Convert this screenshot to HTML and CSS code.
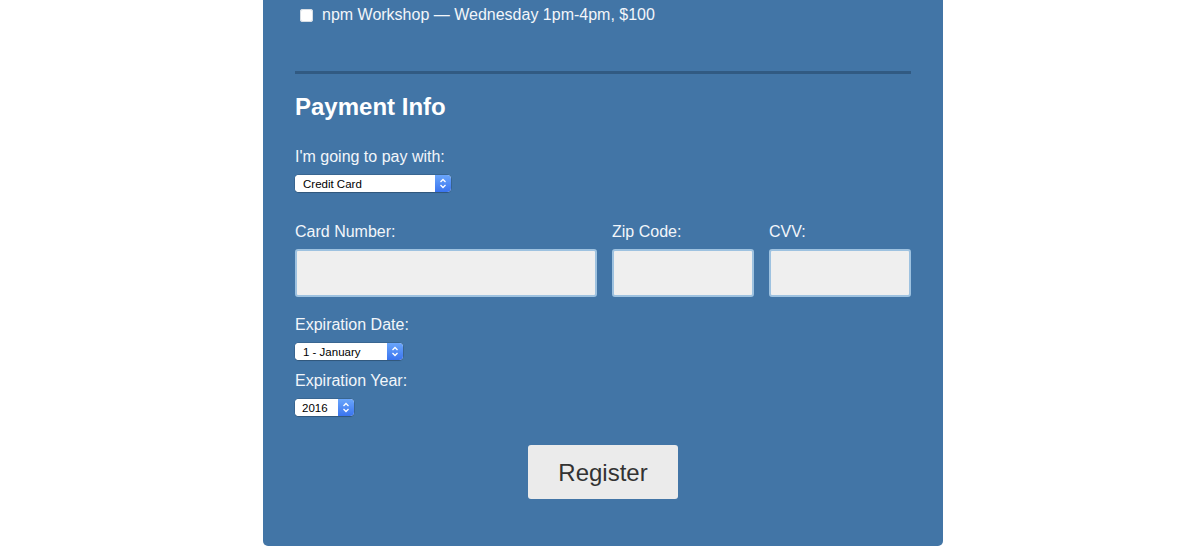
FILE: index.html
```html
<!DOCTYPE html>
<html lang="en">
<head>
<meta charset="utf-8">
<title>Registration</title>
<link rel="stylesheet" href="styles.css">
</head>
<body>
<form class="panel">
  <label class="workshop"><span class="check"></span>npm Workshop — Wednesday 1pm-4pm, $100</label>
  <hr class="divider">
  <h2 class="title">Payment Info</h2>
  <p class="label label-pay">I'm going to pay with:</p>
  <div class="select select-pay">
    <select><option>Credit Card</option></select>
    <span class="arrow"><svg width="8" height="11" viewBox="0 0 8 11"><path d="M1.5 4 L4 1.5 L6.5 4 M1.5 7 L4 9.5 L6.5 7" fill="none" stroke="#fff" stroke-width="1.3"/></svg></span>
  </div>
  <div class="card-grid">
    <div class="field"><p class="label">Card Number:</p><input class="text-input" type="text"></div>
    <div class="field"><p class="label">Zip Code:</p><input class="text-input" type="text"></div>
    <div class="field"><p class="label">CVV:</p><input class="text-input" type="text"></div>
  </div>
  <p class="label label-date">Expiration Date:</p>
  <div class="select select-month">
    <select><option>1 - January</option></select>
    <span class="arrow"><svg width="8" height="11" viewBox="0 0 8 11"><path d="M1.5 4 L4 1.5 L6.5 4 M1.5 7 L4 9.5 L6.5 7" fill="none" stroke="#fff" stroke-width="1.3"/></svg></span>
  </div>
  <p class="label label-year">Expiration Year:</p>
  <div class="select select-year">
    <select><option>2016</option></select>
    <span class="arrow"><svg width="8" height="11" viewBox="0 0 8 11"><path d="M1.5 4 L4 1.5 L6.5 4 M1.5 7 L4 9.5 L6.5 7" fill="none" stroke="#fff" stroke-width="1.3"/></svg></span>
  </div>
  <div class="actions"><button class="register" type="button">Register</button></div>
</form>
</body>
</html>
```
FILE: styles.css
```css
* { box-sizing: border-box; }
html, body { margin: 0; padding: 0; background: #fff; }
body { font-family: "Liberation Sans", Arial, sans-serif; color: #fff; padding-left: 6px; }

.panel {
  width: 680px;
  margin: 0 auto;
  background: #4275a6;
  padding: 6px 32px 47px;
  border-radius: 0 0 5px 5px;
  display: flex;
  flex-direction: column;
  align-items: flex-start;
}

.workshop {
  display: flex;
  align-items: center;
  font-size: 16px;
  line-height: 18px;
  color: #f2f6fa;
}
.check {
  width: 13px;
  height: 13px;
  background: #fff;
  border-radius: 3px;
  margin: 0 9px 0 5px;
  box-shadow: inset 0 0 0 1px #d6dde4;
}

.divider {
  align-self: stretch;
  margin: 47px 0 0;
  border: 0;
  border-top: 3px solid #315a82;
  height: 0;
}

.title {
  margin: 19px 0 0;
  font-size: 24px;
  line-height: 28px;
  font-weight: bold;
  color: #fff;
}

.label {
  margin: 0;
  font-size: 16px;
  line-height: 18px;
  color: #f2f6fa;
}
.label-pay { margin-top: 27px; }
.label-date { margin-top: 19px; }
.label-year { margin-top: 12px; }

.select {
  margin-top: 9px;
  display: inline-flex;
  height: 17px;
  border-radius: 4px;
  overflow: hidden;
  background: #fff;
  box-shadow: 0 0 0 0.5px rgba(0,0,0,0.25), 0 1px 1px rgba(0,0,0,0.15);
}
.select select {
  -webkit-appearance: none;
  appearance: none;
  border: 0;
  outline: 0;
  background: #fff;
  font-family: "Liberation Sans", Arial, sans-serif;
  font-size: 11.5px;
  color: #000;
  padding: 1px 0 0 8px;
  height: 17px;
  line-height: 16px;
  flex: 1;
  min-width: 0;
}
.select .arrow {
  width: 16px;
  height: 17px;
  background: linear-gradient(#6aa6fb, #3a74ef);
  display: flex;
  align-items: center;
  justify-content: center;
}
.select-pay { width: 156px; }
.select-month { width: 108px; }
.select-year { width: 59px; }
.select-year select { padding-left: 7px; }

.card-grid {
  align-self: stretch;
  margin-top: 31px;
  display: grid;
  grid-template-columns: 1fr 142px 142px;
  column-gap: 15px;
}
.field { display: flex; flex-direction: column; }
.text-input {
  margin-top: 8px;
  height: 48px;
  width: 100%;
  background: #efefef;
  border: 2px solid #9ec2e0;
  border-radius: 3px;
  outline: 0;
}

.actions {
  align-self: stretch;
  display: flex;
  justify-content: center;
  margin-top: 29px;
}
.register {
  width: 150px;
  height: 54px;
  background: #ebebeb;
  border: 0;
  border-radius: 3px;
  font-family: "Liberation Sans", Arial, sans-serif;
  font-size: 24px;
  color: #333;
  padding: 2px 0 0;
}
```
